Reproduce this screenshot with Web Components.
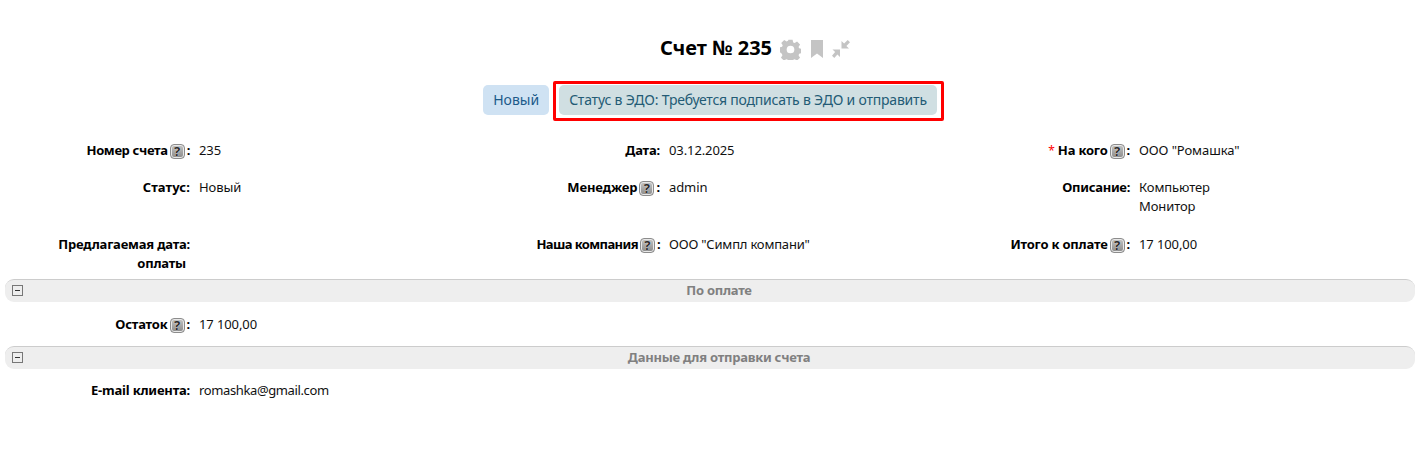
<!DOCTYPE html>
<html>
<head>
<meta charset="utf-8">
<title>Счет № 235</title>
<style>
  html, body { margin: 0; padding: 0; background: #fff; }
  body { font-family: "Noto Sans", sans-serif; font-size: 13px; color: #000; }
</style>
</head>
<body>

<template id="invoice-page-tpl">
  <style>
    :host { display: block; padding: 37px 3px 0 5px; }
    .title { display: flex; justify-content: center; height: 24px; padding-left: 90px; }
    .tags { display: flex; justify-content: center; align-items: flex-start; gap: 4px; height: 41px; margin-top: 20px; padding-left: 7px; }
    .grid { margin-top: 19px; }
  </style>
  <div class="title"><slot name="title"></slot></div>
  <div class="tags"><slot name="tags"></slot></div>
  <div class="grid"><slot></slot></div>
</template>

<template id="page-title-tpl">
  <style>
    :host { display: flex; align-items: center; height: 24px; }
    h1 { margin: 0 8px 0 0; padding-bottom: 2px; font: 700 20px/22px "Noto Sans", sans-serif; color: #000; white-space: nowrap; }
    svg { display: block; fill: #c4c4c4; flex: none; }
    .mark { margin: 0 9px 0 10px; }
  </style>
  <h1><slot></slot></h1>
  <svg width="21" height="21" viewBox="0 0 24 24"><path fill-rule="evenodd" d="M9.600 .8h4.800l.7 3.100 1.700.7 2.700-1.700 3.400 3.400-1.700 2.700.7 1.700 3.100.7v4.800l-3.100.7-.7 1.700 1.700 2.700-3.400 3.400-2.700-1.700-1.700.7-.7 3.100H9.600l-.7-3.100-1.700-.7-2.700 1.700-3.400-3.400 1.700-2.700-.7-1.700L-.7 14.400V9.600l3.100-.7.7-1.700L1.400 4.500l3.400-3.400 2.700 1.700 1.700-.7zM12 7.600a4.400 4.400 0 1 0 0 8.800 4.400 4.400 0 0 0 0-8.800z"/></svg>
  <svg class="mark" width="12" height="18" viewBox="0 0 12 18"><path d="M0 0h12v18l-6-4.500L0 18z"/></svg>
  <svg width="18" height="18" viewBox="0 0 18 18"><path d="M9.500 1v7.500H17l-2.600-2.600L18 2.300 15.700 0l-3.600 3.600zM.5 9.500H8V17l-2.600-2.600L2.300 18 0 15.700l3.100-3.600z"/></svg>
</template>

<template id="status-tag-tpl">
  <style>
    :host { display: block; }
    span { display: block; padding: 0 10px; height: 30px; line-height: 30px; border-radius: 5px; font-size: 14px; background: var(--tag-bg, #cfe2f3); color: var(--tag-fg, #1c5a8a); letter-spacing: var(--tag-ls, 0); white-space: nowrap; }
  </style>
  <span><slot></slot></span>
</template>

<template id="red-frame-tpl">
  <style>
    :host { display: block; padding: 1px 4px 3px 3px; border: 3px solid #f00; border-radius: 2px; }
  </style>
  <slot></slot>
</template>

<template id="field-row-tpl">
  <style>
    :host { display: grid; grid-template-columns: repeat(3, 470px); }
  </style>
  <slot></slot>
</template>

<template id="form-field-tpl">
  <style>
    :host { display: grid; grid-template-columns: 185px 1fr; column-gap: 9px; line-height: 19px; font-size: 13px; }
    .label { font-weight: 700; text-align: right; letter-spacing: var(--label-ls, -.2px); }
    .value { color: #111; letter-spacing: var(--value-ls, -.1px); }
  </style>
  <div class="label"><slot name="label"></slot></div>
  <div class="value"><slot></slot></div>
</template>

<template id="help-icon-tpl">
  <style>
    :host { display: inline-block; width: 15px; height: 15px; margin: 0 2px 0 2px; vertical-align: -1px; }
    span { display: block; box-sizing: border-box; width: 15px; height: 15px; border: 1px solid #8c8c8c; border-radius: 4px; background: linear-gradient(#c4c4c4, #8a8a8a); box-shadow: inset 0 0 0 1px #e8e8e8; font: 700 13px/13px "Noto Sans", sans-serif; letter-spacing: 0; text-align: center; color: #2a2a2a; text-shadow: 0 0 1px #fff; }
  </style>
  <span>?</span>
</template>

<template id="section-bar-tpl">
  <style>
    :host { display: flex; align-items: center; position: relative; height: 23px; border-top: 1px solid #ccc; border-radius: 9px; background: #eee; box-sizing: border-box; }
    .toggle { position: absolute; left: 7px; top: 5px; width: 9px; height: 9px; border: 1px solid #777; display: flex; align-items: center; justify-content: center; }
    .toggle::before { content: ""; width: 5px; height: 1px; background: #333; }
    .name { flex: 1; padding: 0 0 2px 18px; text-align: center; font-weight: 700; font-size: 13px; letter-spacing: -.25px; color: #808080; }
  </style>
  <span class="toggle"></span>
  <div class="name"><slot></slot></div>
</template>

<script>
  function fromTemplate(id) {
    return class extends HTMLElement {
      constructor() {
        super();
        this.attachShadow({ mode: 'open' });
        this.shadowRoot.appendChild(document.getElementById(id).content.cloneNode(true));
      }
    };
  }
  customElements.define('invoice-page', fromTemplate('invoice-page-tpl'));
  customElements.define('page-title', fromTemplate('page-title-tpl'));
  customElements.define('status-tag', fromTemplate('status-tag-tpl'));
  customElements.define('red-frame', fromTemplate('red-frame-tpl'));
  customElements.define('field-row', fromTemplate('field-row-tpl'));
  customElements.define('form-field', fromTemplate('form-field-tpl'));
  customElements.define('help-icon', fromTemplate('help-icon-tpl'));
  customElements.define('section-bar', fromTemplate('section-bar-tpl'));
</script>

<invoice-page>
  <page-title slot="title">Счет № 235</page-title>
  <status-tag slot="tags" style="margin-top:4px">Новый</status-tag>
  <red-frame slot="tags"><status-tag style="--tag-bg:#d0dfe2;--tag-fg:#235b75;--tag-ls:-.21px">Статус в ЭДО: Требуется подписать в ЭДО и отправить</status-tag></red-frame>

  <field-row style="height:37px">
    <form-field style="--label-ls:-.35px"><span slot="label">Номер счета<help-icon></help-icon>:</span>235</form-field>
    <form-field><span slot="label">Дата:</span>03.12.2025</form-field>
    <form-field><span slot="label"><span style="color:#f00;font-weight:400;font-size:12px">*</span> На кого<help-icon></help-icon>:</span>ООО "Ромашка"</form-field>
  </field-row>
  <field-row style="height:57px">
    <form-field style="--label-ls:.1px"><span slot="label">Статус:</span>Новый</form-field>
    <form-field style="--label-ls:-.1px"><span slot="label">Менеджер<help-icon></help-icon>:</span>admin</form-field>
    <form-field style="--label-ls:-.3px"><span slot="label">Описание:</span>Компьютер<br>Монитор</form-field>
  </field-row>
  <field-row style="height:44px">
    <form-field><span slot="label">Предлагаемая дата:<br><span style="padding-right:4px">оплаты</span></span></form-field>
    <form-field style="--label-ls:-.6px;--value-ls:-.2px"><span slot="label">Наша компания<help-icon></help-icon>:</span>ООО "Симпл компани"</form-field>
    <form-field><span slot="label">Итого к оплате<help-icon></help-icon>:</span>17 100,00</form-field>
  </field-row>
  <section-bar>По оплате</section-bar>
  <field-row style="height:44px;padding-top:13px;box-sizing:border-box">
    <form-field><span slot="label">Остаток<help-icon></help-icon>:</span>17 100,00</form-field>
  </field-row>
  <section-bar>Данные для отправки счета</section-bar>
  <field-row style="padding-top:12px">
    <form-field style="--value-ls:-.38px"><span slot="label">E-mail клиента:</span>romashka@gmail.com</form-field>
  </field-row>
</invoice-page>

</body>
</html>
